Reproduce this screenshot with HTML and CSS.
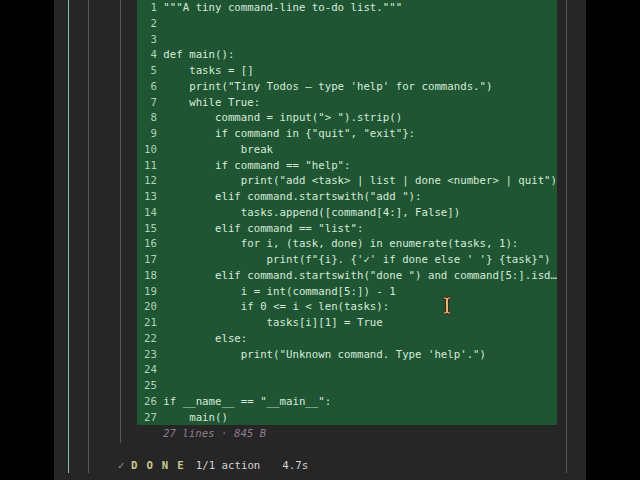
FILE: index.html
```html
<!DOCTYPE html>
<html>
<head>
<meta charset="utf-8">
<link rel="stylesheet" href="styles.css">
</head>
<body>
<div class="panel">
  <div class="g1">
    <div class="g2">
      <div class="g3">
        <div class="code">
<div class="ln"><span class="num">1</span><span class="txt">"""A tiny command-line to-do list."""</span></div>
<div class="ln"><span class="num">2</span><span class="txt"></span></div>
<div class="ln"><span class="num">3</span><span class="txt"></span></div>
<div class="ln"><span class="num">4</span><span class="txt">def main():</span></div>
<div class="ln"><span class="num">5</span><span class="txt">    tasks = []</span></div>
<div class="ln"><span class="num">6</span><span class="txt">    print("Tiny Todos — type 'help' for commands.")</span></div>
<div class="ln"><span class="num">7</span><span class="txt">    while True:</span></div>
<div class="ln"><span class="num">8</span><span class="txt">        command = input("> ").strip()</span></div>
<div class="ln"><span class="num">9</span><span class="txt">        if command in {"quit", "exit"}:</span></div>
<div class="ln"><span class="num">10</span><span class="txt">            break</span></div>
<div class="ln"><span class="num">11</span><span class="txt">        if command == "help":</span></div>
<div class="ln"><span class="num">12</span><span class="txt">            print("add &lt;task&gt; | list | done &lt;number&gt; | quit")</span></div>
<div class="ln"><span class="num">13</span><span class="txt">        elif command.startswith("add "):</span></div>
<div class="ln"><span class="num">14</span><span class="txt">            tasks.append([command[4:], False])</span></div>
<div class="ln"><span class="num">15</span><span class="txt">        elif command == "list":</span></div>
<div class="ln"><span class="num">16</span><span class="txt">            for i, (task, done) in enumerate(tasks, 1):</span></div>
<div class="ln"><span class="num">17</span><span class="txt">                print(f"{i}. {'✓' if done else ' '} {task}")</span></div>
<div class="ln"><span class="num">18</span><span class="txt">        elif command.startswith("done ") and command[5:].isd…</span></div>
<div class="ln"><span class="num">19</span><span class="txt">            i = int(command[5:]) - 1</span></div>
<div class="ln"><span class="num">20</span><span class="txt">            if 0 &lt;= i &lt; len(tasks):</span></div>
<div class="ln"><span class="num">21</span><span class="txt">                tasks[i][1] = True</span></div>
<div class="ln"><span class="num">22</span><span class="txt">        else:</span></div>
<div class="ln"><span class="num">23</span><span class="txt">            print("Unknown command. Type 'help'.")</span></div>
<div class="ln"><span class="num">24</span><span class="txt"></span></div>
<div class="ln"><span class="num">25</span><span class="txt"></span></div>
<div class="ln"><span class="num">26</span><span class="txt">if __name__ == "__main__":</span></div>
<div class="ln"><span class="num">27</span><span class="txt">    main()</span></div>
        </div>
        <div class="meta">27 lines · 845 B</div>
      </div>
      <div class="status"><span class="check">✓ </span><span class="done">DONE</span><span class="info">1/1 action</span><span class="time">4.7s</span></div>
    </div>
  </div>
</div>
<svg class="cursor" width="10" height="19" viewBox="0 0 10 19">
  <path d="M1 1 H4 L5 2 L6 1 H9 V3 H6.5 V16 H9 V18 H6 L5 17 L4 18 H1 V16 H3.5 V3 H1 Z" fill="#e7b477" stroke="#3a2a1a" stroke-width="1"/>
</svg>
</body>
</html>
```

FILE: styles.css
```css
html, body {
  margin: 0;
  padding: 0;
  background: #000;
  width: 640px;
  height: 480px;
  overflow: hidden;
}
body {
  display: flex;
  font-family: "DejaVu Sans Mono", monospace;
  font-size: 10.72px;
  line-height: 15.75px;
}
.panel {
  margin-left: 54px;
  width: 532px;
  height: 480px;
  background: #262626;
  padding-left: 14px;
  box-sizing: border-box;
}
.g1 {
  border-left: 1px solid #86bdb4;
  height: 473px;
  padding-left: 19px;
}
.g2 {
  border-left: 1px solid #585858;
  border-right: 1px solid #585858;
  width: 479px;
  height: 473px;
  box-sizing: border-box;
}
.g3 {
  margin-left: 31px;
  border-left: 1px solid #585858;
  height: 443px;
  padding-left: 16px;
}
.code {
  width: 420px;
  background: #1f5533;
  padding-left: 7px;
  box-sizing: border-box;
  color: #d6ead9;
}
.ln {
  white-space: pre;
  height: 15.75px;
}
.num {
  display: inline-block;
  width: 2ch;
  text-align: right;
  margin-right: 1ch;
  color: #b0d3b8;
}
.meta {
  margin-top: 1px;
  padding-left: 26px;
  font-style: italic;
  color: #8b7f8d;
}
.status {
  margin-top: 15px;
  padding-left: 29px;
  white-space: pre;
  color: #d2d2d2;
}
.check {
  color: #9a9a9a;
}
.done {
  color: #c9c98e;
  font-weight: bold;
  letter-spacing: 9px;
}
.info {
  margin-left: 3px;
}
.time {
  margin-left: 22px;
}
.cursor {
  position: absolute;
  left: 442px;
  top: 296px;
}
```
